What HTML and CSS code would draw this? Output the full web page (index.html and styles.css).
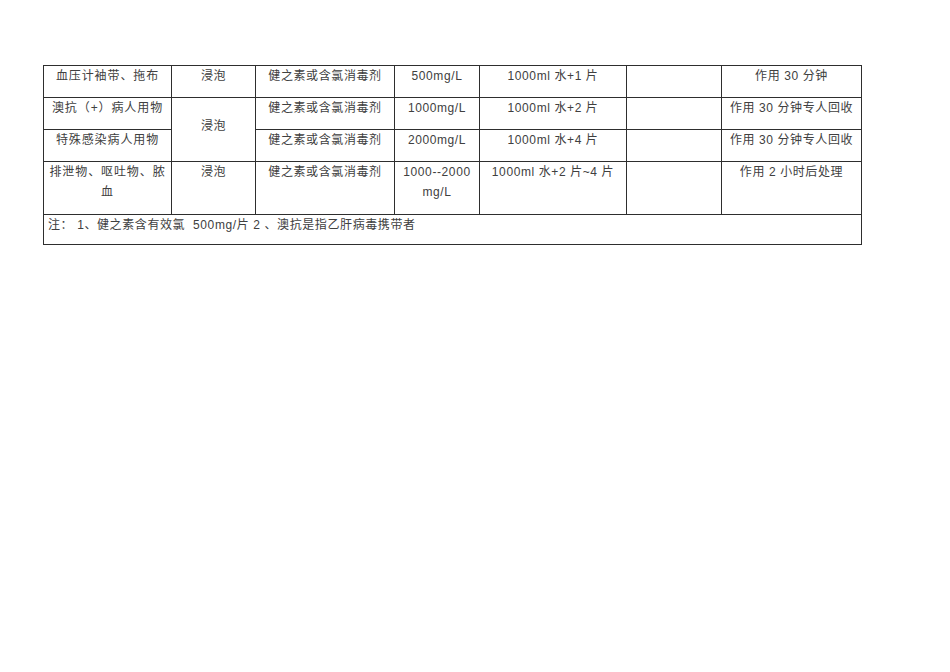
FILE: index.html
```html
<!DOCTYPE html>
<html lang="zh">
<head>
<meta charset="utf-8">
<link rel="stylesheet" href="styles.css">
</head>
<body>
<div class="page">
<table class="grid">
<colgroup>
<col class="c1"><col class="c2"><col class="c3"><col class="c4"><col class="c5"><col class="c6"><col class="c7">
</colgroup>
<tr class="r1">
<td class="first">血压计袖带、拖布</td>
<td>浸泡</td>
<td>健之素或含氯消毒剂</td>
<td>500mg/L</td>
<td>1000ml 水+1 片</td>
<td></td>
<td>作用 30 分钟</td>
</tr>
<tr class="r2">
<td class="first">澳抗（+）病人用物</td>
<td rowspan="2" class="mid">浸泡</td>
<td>健之素或含氯消毒剂</td>
<td>1000mg/L</td>
<td>1000ml 水+2 片</td>
<td></td>
<td>作用 30 分钟专人回收</td>
</tr>
<tr class="r3">
<td class="first">特殊感染病人用物</td>
<td>健之素或含氯消毒剂</td>
<td>2000mg/L</td>
<td>1000ml 水+4 片</td>
<td></td>
<td>作用 30 分钟专人回收</td>
</tr>
<tr class="r4">
<td class="first">排泄物、呕吐物、脓血</td>
<td>浸泡</td>
<td>健之素或含氯消毒剂</td>
<td>1000--2000 mg/L</td>
<td>1000ml 水+2 片~4 片</td>
<td></td>
<td>作用 2 小时后处理</td>
</tr>
<tr class="r5">
<td colspan="7" class="note">注： 1、健之素含有效氯  500mg/片 2 、澳抗是指乙肝病毒携带者</td>
</tr>
</table>
</div>
</body>
</html>
```
FILE: styles.css
```css
html, body {
  margin: 0;
  padding: 0;
  background: #ffffff;
}
.page {
  padding: 65px 0 0 43px;
}
.grid {
  border-collapse: collapse;
  table-layout: fixed;
  width: 818px;
  font-family: "Liberation Sans", "Noto Sans CJK SC", sans-serif;
  font-size: 12px;
  letter-spacing: 0.6px;
  color: #404040;
}
.c1 { width: 128px; }
.c2 { width: 84px; }
.c3 { width: 139px; }
.c4 { width: 85px; }
.c5 { width: 147px; }
.c6 { width: 95px; }
.c7 { width: 140px; }
.grid td {
  border: 1px solid #2e2e2e;
  vertical-align: top;
  text-align: center;
  padding: 0 1px;
  line-height: 20px;
}
.grid td.first {
  padding: 0 3px;
  letter-spacing: 0.9px;
}
.r1, .r2, .r3 { height: 32px; }
.r4 { height: 53px; }
.r5 { height: 30px; }
.grid td.mid {
  vertical-align: middle;
  padding-top: 0;
  padding-bottom: 8px;
}
.grid td.note {
  text-align: left;
  padding-left: 4px;
  white-space: pre;
}
```
